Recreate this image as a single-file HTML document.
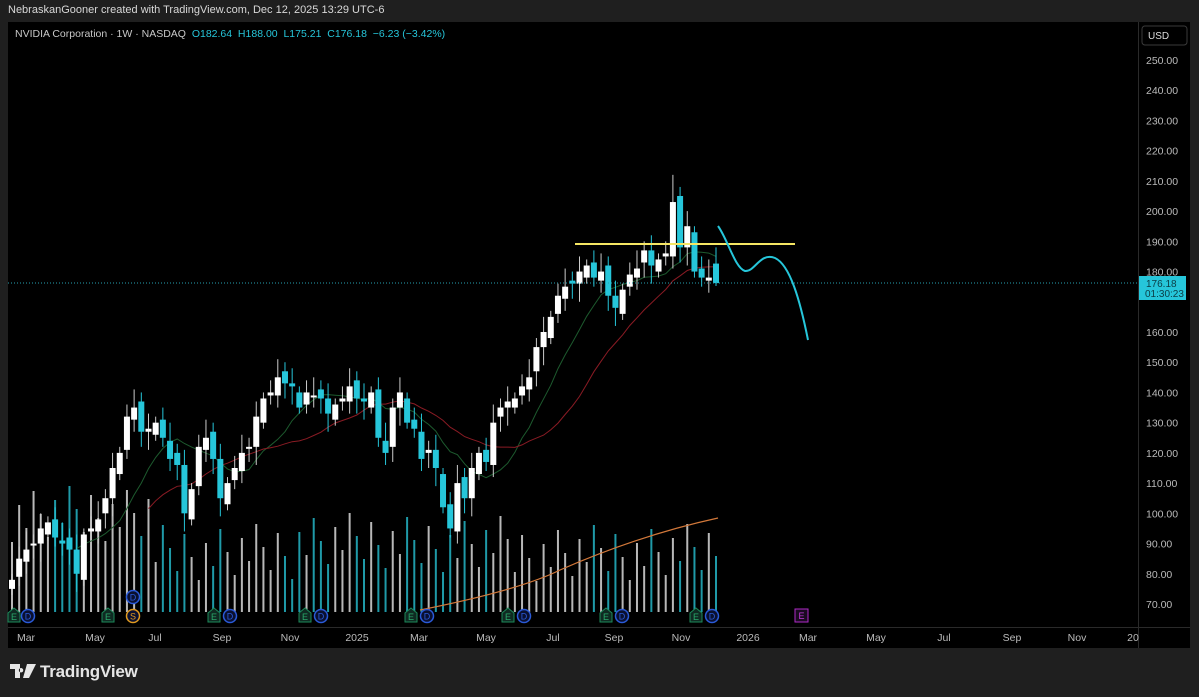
<!DOCTYPE html>
<html><head><meta charset="utf-8"><style>
html,body{margin:0;padding:0;background:#1f1f1f;width:1199px;height:697px;overflow:hidden;font-family:"Liberation Sans",sans-serif}
#top{position:absolute;left:8px;top:4px;color:#d8d8d8;font-size:11px}
#panel{position:absolute;left:8px;top:22px;width:1182px;height:626px;background:#000}
#legend{position:absolute;left:15px;top:28px;font-size:10.5px;color:#c8c8c8;white-space:nowrap}
#legend b{font-weight:normal;color:#26c6da}
#logo{position:absolute;left:10px;top:662px;color:#e6e6e6;font-size:17px;font-weight:bold;letter-spacing:-0.2px}
</style></head><body>
<div id="top">NebraskanGooner created with TradingView.com, Dec 12, 2025 13:29 UTC-6</div>
<div id="panel"></div>
<svg id="s" width="1199" height="697" style="position:absolute;left:0;top:0"></svg>
<div id="legend">NVIDIA Corporation · 1W · NASDAQ&nbsp; <b>O182.64&nbsp; H188.00&nbsp; L175.21&nbsp; C176.18&nbsp; −6.23 (−3.42%)</b></div>
<div id="logo"><svg width="26" height="14" viewBox="0 0 26 14" style="vertical-align:-1px;margin-right:4px"><path d="M0 0H10V14H5V5H0Z M11 4a2.2 2.2 0 1 0 0.1 0Z M17 0H26L19 14H13Z" fill="#e6e6e6"/></svg>TradingView</div>
<script>
var C=[78,85,88,90,95,97,92,90,88,80,93,95,98,105,115,120,132,135,127,128,130,125,118,116,100,108,122,125,118,105,110,115,120,122,132,138,140,145,143,142,135,140,139,138,133,136,138,142,138,137,140,125,120,135,140,130,128,118,121,115,102,95,110,105,115,120,117,130,135,137,138,142,145,155,160,165,172,175,176,180,182,178,180,172,168,174,179,181,187,182,184,186,203,188,195,180,178,178,176.18];
function Y(p){return 60+(250-p)*3.0222}
var n=C.length,x0=12,dx=(716-x0)/(n-1),s='';
var cy='#26c6da';
for(var i=0;i<n;i++){var x=x0+i*dx;var o=i?C[i-1]:C[0]-3;if(i==n-1)o=182.64;var up=C[i]>=o;
 var h=30+((i*37)%60)+(i<20?40:0)+(i>=40&&i<70?10:0);s+='<rect x="'+(x-1)+'" y="'+(612-h)+'" width="2" height="'+h+'" fill="'+(up?'#b8b8b8':'#1f9aa8')+'"/>';}
function ma(k,col){var d='';for(var i=k-1;i<n;i++){var a=0;for(var j=i-k+1;j<=i;j++)a+=C[j];a/=k;d+=(d?'L':'M')+(x0+i*dx).toFixed(1)+' '+Y(a).toFixed(1);}return '<path d="'+d+'" stroke="'+col+'" fill="none" stroke-width="1"/>';}
s+=ma(10,'#1d5a2e')+ma(20,'#8a1b24');
s+='<path d="M420 610 Q520 590 560 570 Q640 535 718 518" stroke="#d2783a" fill="none" stroke-width="1.2"/>';
for(var i=0;i<n;i++){var x=x0+i*dx;var o=i?C[i-1]+((i*13)%5-2):C[0]-3;if(i==n-1)o=182.64;var c=C[i];var up=c>=o;var col=up?'#fff':cy;
 var hi=Math.max(o,c)+2+(i*7)%5,lo=Math.min(o,c)-2-(i*11)%5;if(i==n-1){hi=188;lo=175.21}if(i==92)hi=212;
 s+='<line x1="'+x+'" x2="'+x+'" y1="'+Y(hi)+'" y2="'+Y(lo)+'" stroke="'+(up?'#ccc':cy)+'" stroke-width="1"/>';
 var t=Y(Math.max(o,c)),b=Y(Math.min(o,c));if(b-t<2)b=t+2;
 s+='<rect x="'+(x-3)+'" y="'+t+'" width="6" height="'+(b-t)+'" fill="'+col+'"/>';}
s+='<line x1="575" x2="795" y1="244" y2="244" stroke="#f5e663" stroke-width="2"/>';
s+='<path d="M718 226 C728 240 735 268 745 271 C755 272 760 252 775 258 C790 265 800 300 808 340" stroke="'+cy+'" fill="none" stroke-width="2"/>';
s+='<line x1="8" x2="1138" y1="283" y2="283" stroke="#26a0b0" stroke-dasharray="1 2"/>';
s+='<line x1="1138.5" x2="1138.5" y1="22" y2="648" stroke="#2a2a2a"/><line x1="8" x2="1190" y1="627.5" y2="627.5" stroke="#2a2a2a"/>';
s+='<rect x="1142" y="26" width="45" height="19" rx="3" fill="#000" stroke="#3a3a3a"/><text x="1148" y="39" fill="#ddd" font-size="10">USD</text>';
for(var p=70;p<=250;p+=10){if(p==170)continue;s+='<text x="1146" y="'+(Y(p)+4)+'" fill="#bbb" font-size="10.5">'+p+'.00</text>';}
s+='<rect x="1139" y="276" width="47" height="24" fill="'+cy+'"/><text x="1146" y="287" fill="#0b3d45" font-size="10">176.18</text><text x="1145" y="297" fill="#0b3d45" font-size="10">01:30:23</text>';
var L=[['Mar',26],['May',95],['Jul',155],['Sep',222],['Nov',290],['2025',357],['Mar',419],['May',486],['Jul',553],['Sep',614],['Nov',681],['2026',748],['Mar',808],['May',876],['Jul',944],['Sep',1012],['Nov',1077],['20',1133]];
L.forEach(function(l){s+='<text x="'+l[1]+'" y="641" fill="#bbb" font-size="10.5" text-anchor="middle">'+l[0]+'</text>'});
function E(x){return '<path d="M'+(x-6)+' 622V613L'+x+' 608L'+(x+6)+' 613V622Z" fill="#0f2a22" stroke="#1c8a5a"/><text x="'+x+'" y="620" fill="#2aa86a" font-size="9" text-anchor="middle">E</text>'}
function D(x,y,c,t){return '<circle cx="'+x+'" cy="'+y+'" r="6.5" fill="#0a1030" stroke="'+c+'" stroke-width="1.5"/><text x="'+x+'" y="'+(y+3.5)+'" fill="'+c+'" font-size="9" text-anchor="middle">'+t+'</text>'}
[[14,28],[214,230],[305,321],[411,427],[508,524],[606,622],[696,712]].forEach(function(a){s+=E(a[0])+D(a[1],616,'#2a5ad8','D')});
s+=E(108)+D(133,616,'#e09a20','S')+D(133,597,'#2a5ad8','D');
s+='<rect x="795" y="609" width="13" height="13" fill="#1a0a20" stroke="#b02ac8"/><text x="801.5" y="619" fill="#c03ad8" font-size="9" text-anchor="middle">E</text>';
document.getElementById('s').innerHTML=s;
</script>
</body></html>
